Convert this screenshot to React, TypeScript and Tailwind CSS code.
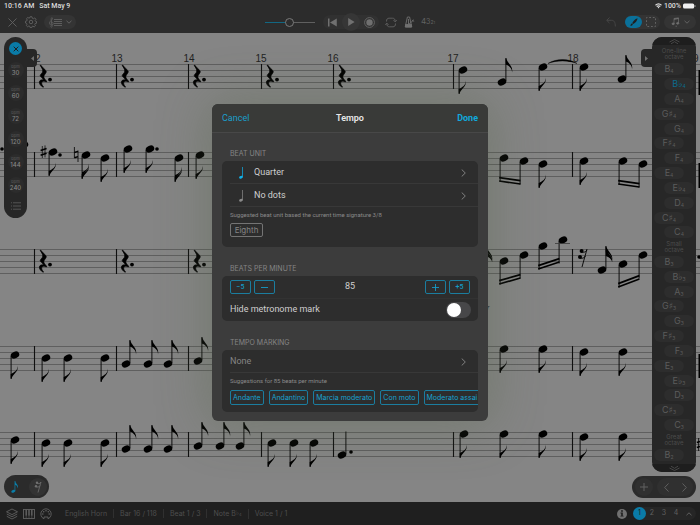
import React from "react";

type NoteKind = "d8" | "u8" | "d16" | "u16" | "down" | "up";
type Note = [number, number, NoteKind];

const STAVES = [64, 152, 249, 346, 432];
const BARS = [34, 116, 188, 261, 333, 453, 572];

const NOTES: Note[] = [
  [463, 70, "d8"], [502, 82, "u8"], [543, 67, "d8"], [584, 67, "d8"], [622, 79, "u8"],
  [24, 145, "d8"], [53, 152, "d8"], [86, 155, "d16"], [105, 158, "d8"], [128, 149, "d8"],
  [150, 149, "d8"], [179, 158, "d16"], [200, 155, "d8"],
  [504, 158, "down"], [524, 161, "down"], [543, 164, "d8"], [584, 161, "d8"], [623, 161, "down"], [643, 164, "down"],
  [482, 270, "u16"], [504, 261, "down"], [524, 255, "down"], [543, 246, "down"], [563, 240, "down"],
  [602, 270, "u16"], [623, 264, "down"], [643, 255, "down"],
  [15, 355, "d8"], [46, 358, "d8"], [68, 358, "d8"], [105, 358, "d8"],
  [126, 364, "u8"], [148, 364, "u8"], [168, 364, "u8"], [198, 361, "u8"],
  [504, 349, "d8"], [543, 349, "d8"], [584, 352, "d8"], [623, 352, "d8"],
  [15, 440, "d8"], [46, 443, "d8"], [68, 443, "d8"], [105, 443, "d8"],
  [126, 449, "u8"], [148, 449, "u8"], [168, 449, "u8"], [198, 446, "u8"], [220, 446, "u8"], [240, 446, "u8"],
  [272, 443, "d8"], [294, 443, "d8"], [314, 443, "d8"], [342, 455, "up"],
  [464, 434, "d8"], [504, 434, "d8"], [543, 434, "d8"], [584, 437, "d8"], [623, 437, "d8"],
];

const RESTS: [number, number][] = [
  [43, 76], [125, 76], [197, 76], [270, 76], [342, 76], [43, 261], [125, 261], [197, 261],
];

const DOTS: [number, number][] = [
  [2, 149], [60, 155], [157, 149], [351, 452], [699, 257],
];

/* Each beam: left x, left y, right x, right y of the outer edge. */
const BEAMS = [
  [500, 181, 520, 184], [619, 184, 639, 187], [500, 284, 520, 278],
  [539, 269, 559, 262], [619, 287, 639, 279],
];

function NoteGlyph({ x, y, kind }: { x: number; y: number; kind: NoteKind }) {
  const isDown = kind.startsWith("d");
  return (
    <g transform={`translate(${x} ${y})`}>
      <ellipse rx="4.4" ry="3.3" transform="rotate(-22)" />
      {isDown && <path d="M-3.9 1V23.500" stroke="#000" strokeWidth="0.9" />}
      {!isDown && <path d="M3.9 -1V-23.5" stroke="#000" strokeWidth="0.9" />}
      {(kind === "d8" || kind === "d16") && (
        <path d="M-4.3 24V19C-1 17.5 3.4 15 2.6 10.5C4.4 16.5 -2.4 18.5 -3.5 24Z" />
      )}
      {kind === "d16" && <path d="M-4 20.5V17C0 15.5 3.2 13 2.7 8.5C4 13.5 0 16 -4 20.5Z" />}
      {(kind === "u8" || kind === "u16") && (
        <path d="M3.5 -24H4.3C4.8 -19 11.8 -16 10 -9.5C10.4 -13.5 7 -16.5 3.8 -17.5Z" />
      )}
      {kind === "u16" && <path d="M3.8 -20C5.5 -16.5 11 -14 10.2 -8C9.5 -11 7 -13 3.8 -14Z" />}
    </g>
  );
}

function Score() {
  return (
    <svg
      className="absolute inset-0 h-full w-full"
      viewBox="0 33 700 469"
      preserveAspectRatio="xMidYMid slice"
      role="img"
      aria-label="Score"
    >
      {STAVES.map((top) => (
        <g key={top}>
          {[0, 6, 12, 18, 24].map((o) => (
            <path key={o} d={`M0 ${top + o + 0.5}H700`} stroke="#5a5a5a" strokeWidth="0.9" />
          ))}
          {BARS.map((x) => (
            <path key={x} d={`M${x + 0.5} ${top}V${top + 25}`} stroke="#101010" strokeWidth="1.1" />
          ))}
        </g>
      ))}
      <g fontFamily='"Liberation Sans", Arial, sans-serif' fontSize="10" fill="#222" textAnchor="middle">
        {["12", "13", "14", "15", "16", "17", "18", "19"].map((n, i) => (
          <text key={n} x={[35, 117, 189, 261, 333, 453, 573, 693][i]} y="62">{n}</text>
        ))}
        <text x="488" y="310" fontSize="8" fontStyle="italic">r</text>
      </g>
      {RESTS.map(([x, y]) => (
        <g key={`${x}-${y}`} transform={`translate(${x} ${y})`}>
          <path strokeWidth="0.7" stroke="#000" d="M-2.4 -11C-1 -9 3.3 -5.5 3.3 -4.3C3.3 -3 0.8 -1 0.8 0.6C0.8 2 2 4 3.8 5.3L3.4 5.9C1 4.6 -1.4 5 -1.4 7C-1.4 8.6 -0.3 10 0.6 11L0.2 11.3C-2 10 -4 8 -3.6 5.8C-3.3 4 -1 3.4 1 4C0 2.5 -2.8 0.8 -2.8 -0.4C-2.8 -1.6 -0.2 -3 -0.2 -5C-0.2 -7 -1.8 -9 -2.9 -10.6Z" />
          <circle cx="7" cy="3.6" r="1.9" />
        </g>
      ))}
      {DOTS.map(([x, y]) => <circle key={`${x}-${y}`} cx={x} cy={y} r="1.8" />)}
      {NOTES.map(([x, y, kind]) => <NoteGlyph key={`${x}-${y}`} x={x} y={y} kind={kind} />)}
      {BEAMS.map(([x1, y1, x2, y2]) => (
        <g key={`${x1}-${y1}`} stroke="#000" strokeWidth="1.7">
          <path d={`M${x1 - 0.8} ${y1}L${x2 + 0.4} ${y2}M${x1 - 0.8} ${y1 - 3.4}L${x2 + 0.4} ${y2 - 3.4}`} />
        </g>
      ))}
      <path d="M548 63.5C556 58.3 569 58.3 577 63.5C569 60 556 60 548 63.5Z" stroke="#000" strokeWidth="0.4" />
      <path d="M555 243.5H570" stroke="#3a3a3a" strokeWidth="0.8" />
      <g stroke="#000" fill="none">
        <path d="M42.3 146V158M45 145.4V157.4" strokeWidth="0.7" />
        <path d="M40.6 150.6L46.6 148.6M40.6 155.2L46.6 153.2" strokeWidth="1.6" />
        <path d="M74.4 147V158M78 150.5V162" strokeWidth="0.8" />
        <path d="M74.4 152.5L78 151.4M74.4 157.8L78 156.6" strokeWidth="1.5" />
        <path d="M587 250C585 253 582 252.5 581 251.5M585.5 256C583.5 259 580.5 258.5 579.5 257.5" strokeWidth="0.9" />
        <path d="M587 249L582 267" strokeWidth="0.9" />
        <path d="M699.5 70V95M699.5 163V188M699.5 354V378" strokeWidth="2" />
        <path d="M698.6 438V451" strokeWidth="0.8" />
        <path d="M696.8 442.4L700 441.4M696.8 447.4L700 446.4" strokeWidth="1.6" />
      </g>
      <circle cx="581.6" cy="251" r="2" />
      <circle cx="580" cy="257" r="2" />
    </svg>
  );
}

function StatusBar() {
  return (
    <div className="flex h-[11px] items-center justify-between px-1 pt-px font-[Roboto,sans-serif] text-[7px] leading-[10px] font-medium text-[#dcdcdc]">
      <div className="flex gap-[5px]">
        <span>10:16 AM</span>
        <span>Sat May 9</span>
      </div>
      <div className="flex items-center gap-[2px]">
        <svg className="h-[6px] w-[7px]" viewBox="0 0 14 11" fill="none" stroke="#dcdcdc" strokeWidth="2.3">
          <path d="M1 4C4.500 .7 9.500 .7 13 4M3.500 6.800C5.500 4.800 8.500 4.800 10.500 6.800" />
          <path d="M5.200 8.200L7 10.300L8.800 8.200C7.800 7.300 6.200 7.300 5.200 8.200Z" fill="#dcdcdc" stroke="none" />
        </svg>
        <span>100%</span>
        <svg className="h-[6px] w-[13px]" viewBox="0 0 13 6">
          <rect x="0" y="0.4" width="11.2" height="5.200" rx="1.500" fill="#f0f0f0" />
          <path d="M12 2.200V3.900" stroke="#aaa" strokeWidth="0.9" />
        </svg>
      </div>
    </div>
  );
}

function Toolbar() {
  return (
    <div className="grid h-[22px] grid-cols-[1fr_auto_1fr] items-center text-[#626262]">
      <div className="flex items-center pl-[7px]">
        <button aria-label="Close" className="flex items-center justify-center">
          <svg className="size-[11px]" viewBox="0 0 11 11" stroke="currentColor" strokeWidth="0.9"><path d="M1.500 1.500L9.500 9.500M9.500 1.500L1.500 9.500" /></svg>
        </button>
        <button aria-label="Settings" className="ml-[7px] flex items-center">
          <svg className="size-[12px]" viewBox="0 0 24 24" fill="none" stroke="currentColor" strokeWidth="1.8">
            <circle cx="12" cy="12" r="3.500" />
            <path d="M10 1.500H14L14.700 4.600L16.700 5.500L19.400 3.800L22 6.600L20.200 9.200L20.900 10.500L23 11V14.500L20.200 15L19.400 16.800L21 19.400L18.300 22L15.800 20.200L14.300 20.800L13.700 23H10.200L9.500 20.600L7.800 19.900L5.200 21.500L2.600 19L4 16.500L3.300 14.800L1 14V10.500L3.700 9.700L4.400 7.900L3 5.300L5.600 2.900L8 4.400L9.400 3.900Z" />
          </svg>
        </button>
        <button aria-label="Clef and staff" className="ml-[7px] flex h-[14px] w-8 items-center justify-center gap-1 rounded-full bg-[#343434]">
          <svg className="h-[11px] w-[13px]" viewBox="0 0 13 11" fill="none" stroke="currentColor">
            <path d="M5 2.500H13M5 4.500H13M5 6.500H13M5 8.500H13" strokeWidth="0.9" />
            <path d="M1.500 9.500C2 10.700 3.200 10.300 3.100 9.200L2.200 2.200C2 .8 3.200 -.1 3.400 1.300C3.500 3.300 .4 4 .5 6.300C.6 8.600 4.300 8.700 4.300 6.600C4.300 4.800 1.900 4.900 2 6.500" strokeWidth="0.8" />
          </svg>
          <svg className="h-[4px] w-[6px]" viewBox="0 0 6 4" fill="none" stroke="currentColor"><path d="M.5 .8L3 3.200L5.500 .8" /></svg>
        </button>
      </div>
      <div className="flex items-center">
        <input
          type="range"
          aria-label="Playback position"
          defaultValue={50}
          className="h-[11px] w-[50px] appearance-none bg-transparent [&::-webkit-slider-runnable-track]:h-px [&::-webkit-slider-runnable-track]:bg-linear-to-r [&::-webkit-slider-runnable-track]:from-[#126782] [&::-webkit-slider-runnable-track]:from-50% [&::-webkit-slider-runnable-track]:to-[#606060] [&::-webkit-slider-runnable-track]:to-50% [&::-webkit-slider-thumb]:-mt-[4px] [&::-webkit-slider-thumb]:size-[9px] [&::-webkit-slider-thumb]:appearance-none [&::-webkit-slider-thumb]:rounded-full [&::-webkit-slider-thumb]:border [&::-webkit-slider-thumb]:border-[#7a7a7a] [&::-webkit-slider-thumb]:bg-[#2c2c2c]"
        />
        <div className="ml-2 flex h-[14px] items-center rounded-full bg-[#313131]">
          <button aria-label="Back to start" className="flex h-[14px] w-[19px] items-center justify-center">
            <svg className="size-[9px]" viewBox="0 0 9 9" fill="#707070"><path d="M0 .5H1.500V8.500H0ZM8.800 .5V8.500L2 4.500Z" /></svg>
          </button>
          <button aria-label="Play" className="flex size-[18px] items-center justify-center rounded-full bg-[#363636]">
            <svg className="size-[8px]" viewBox="0 0 8 8" fill="#707070"><path d="M1.200 0L7.600 4L1.200 8Z" /></svg>
          </button>
          <button aria-label="Record" className="flex h-[14px] w-[19px] items-center justify-center">
            <svg className="size-[11px]" viewBox="0 0 11 11" fill="#707070"><circle cx="5.500" cy="5.500" r="3.200" /><circle cx="5.500" cy="5.500" r="4.900" fill="none" stroke="#707070" strokeWidth="0.8" /></svg>
          </button>
        </div>
        <button aria-label="Loop" className="ml-[6px] flex items-center">
          <svg className="h-[11px] w-[12px]" viewBox="0 0 12 11" fill="none" stroke="currentColor" strokeWidth="0.9">
            <path d="M1.500 4.500C1.500 2.200 2.300 1.200 4 1.200H7.500C9.300 1.200 10.200 2.200 10.200 4.400M10.500 6.500C10.500 8.800 9.700 9.800 8 9.800H4.500C2.700 9.800 1.800 8.800 1.800 6.600" />
            <path d="M8.500 3.200L10.200 4.900L11.800 3.200M.2 7.800L1.800 6.100L3.500 7.800" />
          </svg>
        </button>
        <button aria-label="Metronome" className="ml-[7px] flex items-center">
          <svg className="h-[12px] w-[11px]" viewBox="0 0 11 12" fill="none" stroke="#707070" strokeWidth="0.9">
            <path d="M3.400 1H5.600L7.800 11H1.200Z" />
            <path d="M1.500 8.500H7.500V11H1.500Z" fill="#707070" />
            <path d="M4.500 3V8M4.700 8.500L9.800 3.800M8.200 3.900L9.800 5.600" />
          </svg>
        </button>
        <button aria-label="Count-in" className="ml-[6px] flex items-baseline text-[8px] leading-[10px]">
          4<span className="text-[7px]">3</span><span className="text-[5px]">2</span><span className="text-[4px]">1</span>
        </button>
      </div>
      <div className="flex items-center justify-end pr-1">
        <button aria-label="Undo" className="mr-[9px] flex items-center">
          <svg className="size-[10px]" viewBox="0 0 10 10" fill="none" stroke="#484848" strokeWidth="0.9"><path d="M3.500 .5L.7 3.300L3.500 6.100M.7 3.300H5.500C8 3.300 9.300 5 9.300 9.500" /></svg>
        </button>
        <div className="mr-1 flex h-[14px] items-center rounded-full bg-[#343434]">
          <button aria-label="Edit" className="flex h-[12px] w-[17px] items-center justify-center rounded-full bg-[#0a7099]">
            <svg className="size-[8px]" viewBox="0 0 8 8" fill="#202020"><path d="M7.600 .2C5 1 3 3 2.200 5.200L3.200 6C5.500 5 7.200 2.500 7.600 .2ZM1.900 5.600C.8 5.800 1 7 .2 7.700C1.500 8 2.700 7.500 2.800 6.300Z" /></svg>
          </button>
          <button aria-label="Select" className="flex h-[14px] w-[18px] items-center justify-center">
            <svg className="size-[10px]" viewBox="0 0 10 10" fill="none" stroke="currentColor"><rect x="0.500" y="0.500" width="9" height="9" strokeDasharray="1.800 1.800" strokeDashoffset="0.9" /></svg>
          </button>
        </div>
        <button aria-label="Notes" className="flex h-[14px] w-8 items-center justify-center gap-1 rounded-full bg-[#343434]">
          <svg className="h-[10px] w-[9px]" viewBox="0 0 9 10" fill="#707070" stroke="#707070" strokeWidth="0.7">
            <path d="M3 6.500V1.500L7.500 .8V6" fill="none" /><path d="M3 2.200L7.500 1.500" strokeWidth="1.200" />
            <ellipse cx="2.200" cy="6.800" rx="1.200" ry="0.9" /><ellipse cx="6.700" cy="6.300" rx="1.200" ry="0.9" /><path d="M4.500 9.200H6" />
          </svg>
          <svg className="h-[4px] w-[6px]" viewBox="0 0 6 4" fill="none" stroke="currentColor"><path d="M.5 .8L3 3.200L5.500 .8" /></svg>
        </button>
      </div>
    </div>
  );
}

function TempoPanel() {
  return (
    <div className="flex items-start">
      <div className="flex h-[181px] w-[23px] flex-col items-center rounded-full bg-[#272727] pt-[5px]">
        <button aria-label="Close panel" className="flex size-[13px] shrink-0 items-center justify-center rounded-full bg-[#0a7ba7]">
          <svg className="size-[6px]" viewBox="0 0 6 6" stroke="#202020"><path d="M.7 .7L5.300 5.300M5.300 .7L.7 5.300" /></svg>
        </button>
        <div className="mt-[7px] flex flex-col gap-[7px]">
          {["30", "60", "72", "120", "144", "240"].map((bpm) => (
            <button key={bpm} className="flex size-[16px] flex-col items-center justify-center rounded-full bg-[#2c2c2c]">
              <span className="text-[4px] leading-[5px] text-[#5c5c5c]">bpm</span>
              <span className="text-[6px] leading-[7px] font-medium text-[#858585]">{bpm}</span>
            </button>
          ))}
        </div>
        <button aria-label="Tempo list" className="mt-[9px] flex">
          <svg className="h-[8px] w-[10px]" viewBox="0 0 10 8" stroke="#606060" strokeWidth="0.8"><path d="M0 .8H1M2 .8H10M0 4H1M2 4H10M0 7.200H1M2 7.200H10" /></svg>
        </button>
      </div>
      <button aria-label="Collapse tempo panel" className="mt-3 flex h-[18px] w-[10px] items-center justify-center rounded-r-sm bg-[#272727]">
        <svg className="h-[5px] w-[3px]" viewBox="0 0 3 5" fill="#707070"><path d="M3 0V5L0 2.500Z" /></svg>
      </button>
    </div>
  );
}

const PITCHES: { name: string; accidental?: string; left?: boolean }[] = [
  { name: "B", left: true }, { name: "B", accidental: "♭" }, { name: "A" }, { name: "G", accidental: "♯", left: true },
  { name: "G" }, { name: "F", accidental: "♯", left: true }, { name: "F" }, { name: "E", left: true },
  { name: "E", accidental: "♭" }, { name: "D" }, { name: "C", accidental: "♯", left: true }, { name: "C" },
];

function Octave({ title, octave, count }: { title: string; octave: number; count: number }) {
  return (
    <>
      <div className="flex flex-1 items-center justify-center text-center text-[6px] leading-[6px] text-[#4c4c4c]">
        {title}<br />octave
      </div>
      {PITCHES.slice(0, count).map((p, i) => (
        <div key={i} className={`flex flex-1 items-center ${p.left ? "justify-start" : "justify-end"}`}>
          <button
            className={`flex h-[12px] w-[30px] items-center justify-center rounded-full bg-[#2d2d2d] text-[9px] leading-[10px] ${octave === 4 && i === 1 ? "text-[#0b6c8d]" : "text-[#5c5c5c]"}`}
          >
            <span>{p.name}</span>
            {p.accidental && <span className="font-[DejaVu_Sans,sans-serif] text-[9px]">{p.accidental}</span>}
            <span className="pt-1 text-[5px]">{octave}</span>
          </button>
        </div>
      ))}
    </>
  );
}

function PitchPanel() {
  return (
    <div className="flex min-h-0 flex-1 items-start">
      <button aria-label="Collapse pitch panel" className="mt-3 flex h-[18px] w-[11px] items-center justify-center rounded-l-sm bg-[#272727]">
        <svg className="h-[5px] w-[3px]" viewBox="0 0 3 5" fill="#707070"><path d="M0 0V5L3 2.500Z" /></svg>
      </button>
      <div className="flex h-full w-[44px] flex-col overflow-hidden rounded-[10px] bg-[#272727]">
        <button aria-label="Octave up" className="flex h-[8px] items-center justify-center bg-[#1e1e1e]">
          <svg className="h-[5px] w-[11px]" viewBox="0 0 11 5" fill="none" stroke="#585858" strokeWidth="0.7"><path d="M.5 3L5.500 .5L10.500 3M2 4.800L5.500 2.700L9 4.800" /></svg>
        </button>
        <div className="flex min-h-0 flex-1 flex-col px-[2px] py-[2px]">
          <Octave title="One-line" octave={4} count={12} />
          <Octave title="Small" octave={3} count={12} />
          <Octave title="Great" octave={2} count={1} />
        </div>
        <button aria-label="Octave down" className="flex h-[8px] items-center justify-center bg-[#1e1e1e]">
          <svg className="h-[5px] w-[11px]" viewBox="0 0 11 5" fill="none" stroke="#585858" strokeWidth="0.7"><path d="M.5 2L5.500 4.500L10.500 2M2 .2L5.500 2.300L9 .2" /></svg>
        </button>
      </div>
    </div>
  );
}

function Footer() {
  return (
    <footer className="flex h-[23px] shrink-0 items-center justify-between bg-[#1f1f1f] pr-1 pl-[6px] text-[7px] text-[#4e4e4e]">
      <div className="flex items-center">
        <div className="flex gap-[5px] text-[#606060]">
          <button aria-label="Layers">
            <svg className="size-[12px]" viewBox="0 0 12 12" fill="none" stroke="currentColor" strokeWidth="0.9"><path d="M6 1L11.500 3.800L6 6.600L.5 3.800ZM.8 6L6 8.700L11.200 6M.8 8.300L6 11L11.200 8.300" /></svg>
          </button>
          <button aria-label="Keyboard">
            <svg className="size-[12px]" viewBox="0 0 12 12" fill="none" stroke="currentColor" strokeWidth="0.9"><rect x="0.500" y="1.500" width="11" height="9" /><path d="M3.200 7V10.500M6 7V10.500M8.800 7V10.500" strokeWidth="0.6" /><path d="M3.200 1.500V7.500M6 1.500V7.500M8.800 1.500V7.500" strokeWidth="1.500" /></svg>
          </button>
          <button aria-label="MIDI">
            <svg className="size-[12px]" viewBox="0 0 12 12" fill="none" stroke="currentColor" strokeWidth="0.9"><path d="M4 10.800A5.200 5.200 0 1 1 8 10.800V9H4Z" /><g fill="currentColor" stroke="none"><circle cx="2.800" cy="6" r="0.8" /><circle cx="3.700" cy="3.700" r="0.8" /><circle cx="6" cy="2.800" r="0.8" /><circle cx="8.300" cy="3.700" r="0.8" /><circle cx="9.200" cy="6" r="0.8" /></g></svg>
          </button>
        </div>
        <div className="ml-[7px] flex items-center divide-x divide-[#303030] leading-[9px]">
          <span className="px-[6px]">English Horn</span>
          <span className="px-[6px]">Bar 16 / 118</span>
          <span className="px-[6px]">Beat 1 / 3</span>
          <span className="flex px-[6px]">Note B<span className="font-[DejaVu_Sans,sans-serif]">♭</span><span className="pt-px text-[4px]">4</span></span>
          <span className="px-[6px]">Voice 1 / 1</span>
        </div>
      </div>
      <div className="flex items-center gap-[6px]">
        <button aria-label="Info" className="flex size-[10px] items-center justify-center rounded-full bg-[#707070]">
          <svg className="h-[7px] w-[4px]" viewBox="0 0 4 7" fill="#1f1f1f"><circle cx="2" cy="1" r="0.9" /><path d="M.5 2.500H2.800V5.700H3.600V6.600H.4V5.700H1.200V3.400H.5Z" /></svg>
        </button>
        <div className="flex h-[13px] items-center rounded-full bg-[#262626] text-[#606060]">
          <button className="size-[13px] rounded-full bg-[#0a7ba7] text-[#222]">1</button>
          <button className="w-[12px]">2</button>
          <button className="w-[12px]">3</button>
          <button className="w-[12px]">4</button>
          <button aria-label="More voices" className="flex w-[14px] justify-center">
            <svg className="h-[4px] w-[6px]" viewBox="0 0 6 4" fill="none" stroke="currentColor"><path d="M.5 3.200L3 .8L5.500 3.200" /></svg>
          </button>
        </div>
      </div>
    </footer>
  );
}

function Chevron() {
  return <svg className="h-[8px] w-[5px]" viewBox="0 0 5 8" fill="none" stroke="#8a8a8a" strokeWidth="0.9"><path d="M.7 .5L4.300 4L.7 7.500" /></svg>;
}

function QuarterIcon() {
  return (
    <svg className="h-[12px] w-[5px]" viewBox="0 0 5 12" fill="currentColor"><ellipse cx="2" cy="10.300" rx="1.900" ry="1.300" transform="rotate(-20 2 10.300)" /><path d="M3.300 0H4V10.300H3.300Z" /></svg>
  );
}

const STEP = "flex h-[14px] w-[21px] items-center justify-center rounded-[2px] border border-[#1b7d9f] text-[7px] font-medium text-[#149bc7]";
const SECTION = "mb-[3px] ml-2 text-[7px] leading-[8px] text-[#858585]";
const CARD = "overflow-hidden rounded-[5px] bg-[#2d2d2d]";
const ROW = "flex h-[23px] w-full items-center border-b border-[#383838] pt-px pr-[12px] font-[Roboto,sans-serif] text-[9px]";
const HINT = "mt-1 font-[Roboto,sans-serif] text-[6px] leading-[8px] text-[#8a8a8a]";

function TempoDialog() {
  return (
    <div
      role="dialog"
      aria-labelledby="tempo-title"
      className="w-[276px] rounded-[6px] bg-[#3c3c3c] pb-[9px] shadow-[0_0_50px_4px_rgba(84,100,72,0.38)]"
    >
      <header className="grid h-[29px] grid-cols-3 items-center rounded-t-[6px] border-b border-[#484848] bg-[#393a38] px-[10px] pt-[2px] font-[Roboto,sans-serif] text-[9px]">
        <button className="justify-self-start text-[#1a9fcb]">Cancel</button>
        <h1 id="tempo-title" className="text-center font-semibold text-[#e8e8e8]">Tempo</h1>
        <button className="justify-self-end font-bold text-[#10a8dc]">Done</button>
      </header>
      <div className="flex flex-col gap-[18px] px-[10px] pt-[17px]">
        <section>
          <h2 className={SECTION}>BEAT UNIT</h2>
          <div className={CARD}>
            <div className="pl-2">
              <button className={`${ROW} pl-[9px] text-[#cfcfcf]`}>
                <span className="text-[#10b0e8]"><QuarterIcon /></span>
                <span className="ml-[10px] flex-1 text-left">Quarter</span>
                <Chevron />
              </button>
              <button className={`${ROW} pl-[9px] text-[#cfcfcf]`}>
                <span className="text-[#8a8a8a]"><QuarterIcon /></span>
                <span className="ml-[10px] flex-1 text-left">No dots</span>
                <Chevron />
              </button>
              <p className={HINT}>Suggested beat unit based the current time signature 3/8</p>
              <button className="mt-1 mb-[10px] flex h-[14px] w-[33px] items-center justify-center rounded-[2px] border border-[#747474] text-[8px] text-[#858585]">Eighth</button>
            </div>
          </div>
        </section>
        <section>
          <h2 className={SECTION}>BEATS PER MINUTE</h2>
          <div className={CARD}>
            <div className="pl-2 font-[Roboto,sans-serif]">
              <div className="flex h-[23px] items-center justify-between border-b border-[#323232] pr-2">
                <div className="flex gap-[3px]">
                  <button className={STEP}>−5</button>
                  <button className={STEP} aria-label="Minus one"><svg className="size-[7px]" viewBox="0 0 7 7" stroke="currentColor" strokeWidth="0.9"><path d="M0 3.500H7" /></svg></button>
                </div>
                <output className="text-[9px] text-[#cfcfcf]">85</output>
                <div className="flex gap-[3px]">
                  <button className={STEP} aria-label="Plus one"><svg className="size-[7px]" viewBox="0 0 7 7" stroke="currentColor" strokeWidth="0.9"><path d="M0 3.500H7M3.500 0V7" /></svg></button>
                  <button className={STEP}>+5</button>
                </div>
              </div>
              <label className="flex h-[22px] items-center justify-between pr-[7px] text-[9px] text-[#cfcfcf]">
                Hide metronome mark
                <input
                  type="checkbox"
                  role="switch"
                  className="flex h-[16px] w-[25px] appearance-none items-center rounded-full bg-[#474749] px-px before:size-[14px] before:rounded-full before:bg-white checked:justify-end checked:bg-[#10a8dc]"
                />
              </label>
            </div>
          </div>
        </section>
        <section>
          <h2 className={SECTION}>TEMPO MARKING</h2>
          <div className={CARD}>
            <div className="pl-2">
              <button className={`${ROW} justify-between text-[#858585]`}>
                None
                <Chevron />
              </button>
              <p className={HINT}>Suggestions for 85 beats per minute</p>
              <div className="mt-[5px] mb-[7px] flex gap-[5px] overflow-hidden">
                {["Andante", "Andantino", "Marcia moderato", "Con moto", "Moderato assai"].map((name) => (
                  <button key={name} className="h-[15px] shrink-0 rounded-[2px] border border-[#1b7d9f] px-[2px] text-[7px] leading-[13px] whitespace-nowrap text-[#18a2d0]">{name}</button>
                ))}
              </div>
            </div>
          </div>
        </section>
      </div>
    </div>
  );
}

export default function App() {
  return (
    <div className="relative flex h-screen flex-col overflow-hidden bg-[#858585] font-[Inter,sans-serif]">
      <header className="shrink-0 bg-[#2c2c2c]">
        <StatusBar />
        <Toolbar />
      </header>
      <main className="relative min-h-0 flex-1">
        <Score />
        <div className="relative flex h-full justify-between p-1">
          <div className="flex flex-col items-start justify-between">
            <TempoPanel />
            <div className="flex h-[23px] w-[45px] items-center justify-around rounded-full bg-[#2b2b2b]">
              <button aria-label="Note input" className="flex size-[18px] items-center justify-center text-[#0b7ea8]">
                <svg className="h-[12px] w-[8px]" viewBox="0 0 8 12" fill="currentColor"><ellipse cx="2.300" cy="10.300" rx="2" ry="1.400" transform="rotate(-20 2.300 10.300)" /><path d="M3.600 0H4.300C4.500 3 8.200 4 6.700 7.500C6.900 5.500 5.500 4.300 4.300 4V10.300H3.600Z" /></svg>
              </button>
              <button aria-label="Rest input" className="flex size-[18px] items-center justify-center rounded-full bg-[#333] text-[#707070]">
                <svg className="h-[12px] w-[8px]" viewBox="0 0 8 12" fill="none" stroke="currentColor" strokeWidth="0.8"><path d="M7 1L4 11.500M7 1C6 3 4 3 3 2M6 4.500C5 6.500 3 6.500 2 5.500" /><g fill="currentColor" stroke="none"><circle cx="3" cy="1.800" r="1.200" /><circle cx="2" cy="5.300" r="1.200" /></g></svg>
              </button>
            </div>
          </div>
          <div className="flex flex-col items-end gap-1">
            <PitchPanel />
            <div className="flex h-[22px] w-[64px] items-center justify-between rounded-full bg-[#2b2b2b] px-[3px] text-[#606060]">
              <button aria-label="Add" className="flex size-[18px] items-center justify-center rounded-full bg-[#303030]">
                <svg className="size-[8px]" viewBox="0 0 8 8" stroke="currentColor"><path d="M4 0V8M0 4H8" /></svg>
              </button>
              <div className="flex h-[18px] w-[36px] items-center justify-around rounded-full bg-[#303030]">
                <button aria-label="Previous"><svg className="h-[9px] w-[5px]" viewBox="0 0 5 9" fill="none" stroke="currentColor"><path d="M4.500 .5L.7 4.500L4.500 8.500" /></svg></button>
                <button aria-label="Next"><svg className="h-[9px] w-[5px]" viewBox="0 0 5 9" fill="none" stroke="currentColor"><path d="M.5 .5L4.300 4.500L.5 8.500" /></svg></button>
              </div>
            </div>
          </div>
        </div>
      </main>
      <Footer />
      <div className="absolute inset-0 flex items-center justify-center">
        <TempoDialog />
      </div>
    </div>
  );
}
